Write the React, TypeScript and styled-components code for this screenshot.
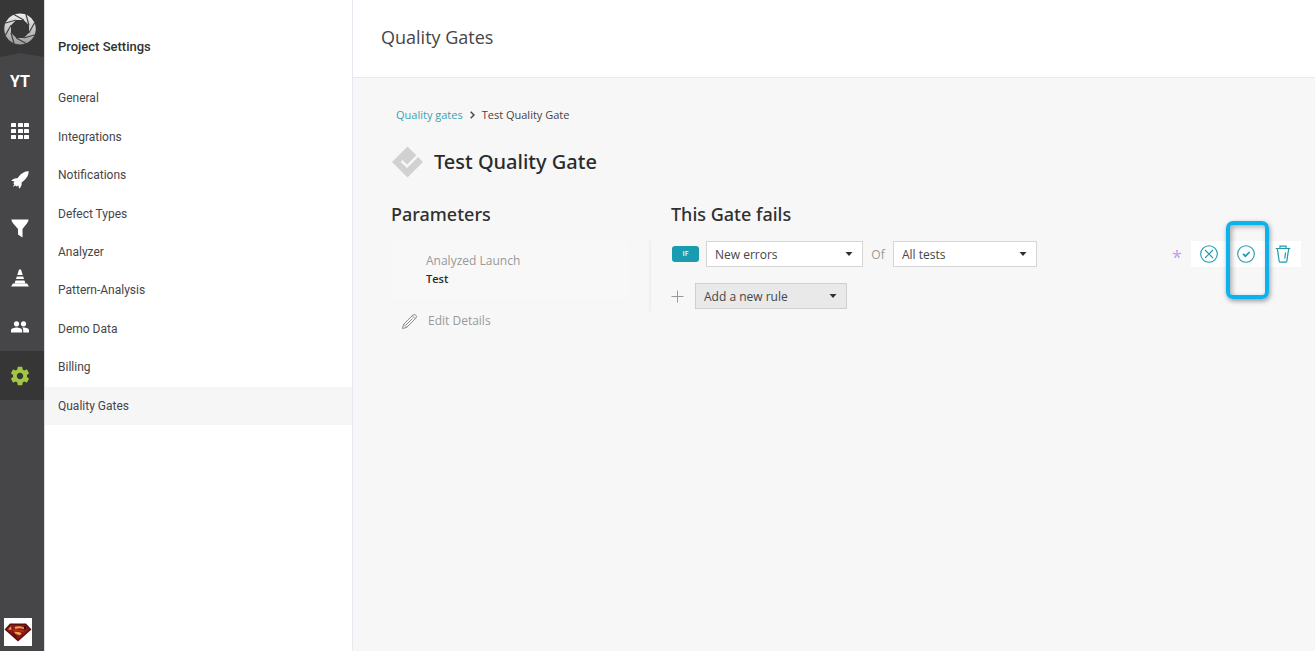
import React from "react";
import styled, { createGlobalStyle, css } from "styled-components";

const GlobalStyle = createGlobalStyle`
  *, *::before, *::after { box-sizing: border-box; }
  body {
    margin: 0;
    background: #f7f7f7;
    color: #464547;
    font-family: "Open Sans", "Noto Sans", sans-serif;
    font-size: 12px;
  }
  button, select { font-family: inherit; }
  h1, h2, h3, p, ul, ol, dl, dd { margin: 0; padding: 0; }
  ul, ol { list-style: none; }
`;

const Page = styled.div`
  display: flex;
  min-height: 100vh;
`;

const Rail = styled.nav`
  flex: 0 0 44px;
  display: flex;
  flex-direction: column;
  background: #464547;
`;

const LogoArea = styled.a`
  display: block;
  height: 57px;
  svg { display: block; }
`;

const RailItem = styled.a<{ $active?: boolean }>`
  height: 49px;
  padding-right: 4px;
  display: flex;
  align-items: center;
  justify-content: center;
  color: ${(p) => (p.$active ? "#a3c644" : "#ffffff")};
  background: ${(p) => (p.$active ? "#363636" : "transparent")};
  font: 700 16px/20px "Roboto", sans-serif;
  text-decoration: none;
`;

const Avatar = styled.button`
  width: 28px;
  height: 28px;
  margin: auto 0 5px 4px;
  padding: 0;
  border: 0;
  background: #ffffff;
  svg { display: block; }
`;

const Settings = styled.aside`
  flex: 0 0 309px;
  padding-top: 36px;
  background: #ffffff;
  border-left: 1px solid #dcdcdc;
  border-right: 1px solid #e6e9f0;
  font-family: "Roboto", sans-serif;
`;

const SettingsTitle = styled.h2`
  padding-left: 13px;
  margin-bottom: 21px;
  font-size: 13px;
  line-height: 22px;
  font-weight: 500;
  color: #303233;
`;

const SettingsList = styled.ul`
  display: grid;
  grid-auto-rows: 1fr;
  height: 346px;
`;

const SettingsLink = styled.a<{ $active?: boolean }>`
  display: flex;
  align-items: center;
  height: 100%;
  padding-left: 13px;
  color: #464547;
  font-size: 12px;
  text-decoration: none;
  background: ${(p) => (p.$active ? "#f6f6f6" : "transparent")};
`;

const Main = styled.main`
  flex: 1;
  min-width: 0;
`;

const Header = styled.header`
  height: 78px;
  padding: 24px 28px;
  background: #ffffff;
  border-bottom: 1px solid #e6e9f0;
`;

const PageTitle = styled.h1`
  font-size: 18px;
  line-height: 26px;
  font-weight: 400;
`;

const Content = styled.div`
  padding: 27px 14px 28px 38px;
`;

const Crumbs = styled.ol`
  display: flex;
  align-items: center;
  gap: 7px;
  padding-left: 5px;
  font-size: 11px;
  line-height: 20px;
  li { display: flex; align-items: center; gap: 7px; }
  a { color: #39a2b1; text-decoration: none; }
`;

const GateHeading = styled.div`
  display: flex;
  align-items: center;
  gap: 11px;
  margin-top: 21px;
  svg { display: block; }
`;

const GateName = styled.h2`
  font-family: "Noto Sans", "Open Sans", sans-serif;
  font-size: 20px;
  line-height: 32px;
  font-weight: 500;
  color: #2b2b2c;
`;

const Columns = styled.div`
  display: flex;
  margin-top: 23px;
`;

const Parameters = styled.section`
  flex: 0 0 280px;
`;

const Gate = styled.section`
  flex: 1;
  min-width: 0;
`;

const SectionTitle = styled.h3`
  font-family: "Noto Sans", "Open Sans", sans-serif;
  font-size: 18px;
  line-height: 26px;
  font-weight: 500;
  color: #303031;
  margin-bottom: 14px;
`;

const ParameterArea = styled.div`
  display: flex;
  justify-content: space-between;
  height: 70px;
  width: 260px;
  border-right: 2px solid #efefef;
`;

const ParameterCard = styled.dl`
  width: 237px;
  height: 58px;
  padding: 11px 0 0 35px;
  background: #f8f8f8;
  border-radius: 3px;
  line-height: 18px;
  dt { color: #999999; }
  dd { color: #2b2b2c; font-size: 11px; font-weight: 600; }
`;

const EditButton = styled.button`
  display: flex;
  align-items: center;
  gap: 10px;
  margin-left: 10px;
  padding: 0;
  border: 0;
  background: none;
  color: #999999;
  font-size: 12px;
  line-height: 20px;
`;

const RuleRow = styled.div`
  display: flex;
  align-items: center;
  height: 26px;
  margin-bottom: 16px;
`;

const IfBadge = styled.span`
  width: 27px;
  height: 16px;
  margin: 0 7px 0 1px;
  border-radius: 3px;
  background: #1a9cb0;
  color: #ffffff;
  font-size: 7px;
  font-weight: 600;
  line-height: 16px;
  text-align: center;
`;

const OfText = styled.span`
  width: 30px;
  text-align: center;
  color: #999999;
`;

const PlusSlot = styled.span`
  width: 24px;
  svg { display: block; }
`;

const SelectBox = styled.div<{ $width: number; $muted?: boolean }>`
  display: grid;
  align-items: center;
  width: ${(p) => p.$width}px;
  height: 26px;
  > * { grid-area: 1 / 1; }
  svg { justify-self: end; margin-right: 10px; pointer-events: none; }
  select {
    appearance: none;
    width: 100%;
    height: 26px;
    padding: 0 24px 0 8px;
    border: 1px solid #d5d5d5;
    border-radius: 0;
    background: #ffffff;
    color: #464547;
    font-size: 12px;
    ${(p) => p.$muted && css`background: #e9e9e9; border-color: #cfcfcf;`}
  }
`;

const Required = styled.span`
  margin: 0 9px 0 auto;
  color: #c69bf5;
  font-size: 18px;
  line-height: 26px;
  height: 20px;
`;

const Actions = styled.div`
  display: flex;
  width: 110px;
  height: 26px;
  background: #ffffff;
`;

const ActionButton = styled.button`
  position: relative;
  flex: 1;
  display: flex;
  align-items: center;
  justify-content: center;
  padding: 0;
  border: 0;
  background: none;
  color: #1f9bae;
`;

const Highlight = styled.span`
  position: absolute;
  top: -20px;
  left: -2px;
  width: 43px;
  height: 78px;
  border: 4px solid #0cb2ee;
  border-radius: 7px;
  box-shadow: 1px 2px 5px rgba(0, 0, 0, 0.4), inset 2px 2px 5px rgba(0, 0, 0, 0.3);
`;

const BLADES = [0, 1, 2, 3, 4, 5, 6, 7];

const Logo = () => (
  <svg width="44" height="57" viewBox="0 0 44 57" aria-hidden="true">
    <defs>
      <linearGradient id="metal" x1="0" y1="0" x2="0" y2="1">
        <stop offset="0" stopColor="#f1f1f1" />
        <stop offset="1" stopColor="#9c9c9c" />
      </linearGradient>
    </defs>
    <path d="M0 0H44V57L20 53L0 57Z" fill="#373737" />
    <path
      fillRule="evenodd"
      fill="url(#metal)"
      d="M20 13.5a15.8 15.5 0 1 0 .01 0ZM16.300 20L23.700 20L29 25.300L29 32.700L23.700 38L16.300 38L11 32.700L11 25.300Z"
    />
    {BLADES.map((i) => (
      <path
        key={i}
        d="M23.700 20L14 14.500"
        transform={`rotate(${i * 45} 20 29)`}
        fill="none"
        stroke="#404040"
        strokeWidth="1.200"
      />
    ))}
  </svg>
);

const GridIcon = () => (
  <svg width="18" height="16" viewBox="0 0 18 16" fill="currentColor" aria-hidden="true">
    {[0, 6, 12].map((y) =>
      [0, 7, 13].map((x) => <rect key={`${x}-${y}`} x={x} y={y} width="5" height="4" rx="0.6" />)
    )}
  </svg>
);

const RocketIcon = () => (
  <svg width="18" height="18" viewBox="0 0 18 18" fill="currentColor" aria-hidden="true">
    <path d="M17.700.300C13.800.200 10.400 2.200 7.800 5.600L6.500 7.300C4.200 6.800 1.800 7.700.300 9.800L3.500 10.400 2.300 12.300 3.400 13.300 1.800 15.700 4.500 14.500 5.500 15.600 7.500 14.400 8 17.700C10.100 16.200 11 14 10.600 11.500L12.500 10C15.900 7.300 17.700 4.200 17.700.300Z" />
  </svg>
);

const FilterIcon = () => (
  <svg width="18" height="19" viewBox="0 0 18 19" fill="currentColor" aria-hidden="true">
    <path d="M.4.500H17.600Q17.400 2.500 16.200 3.900L11.500 10V18.600L7 15.600V10L1.800 3.900Q.6 2.500.4.500Z" />
  </svg>
);

const ConeIcon = () => (
  <svg width="18" height="18" viewBox="0 0 18 18" fill="currentColor" aria-hidden="true">
    <path d="M8 .5H10L11.700 6H6.300ZM5.800 7.400H12.200L13 10H5ZM4.500 11.400H13.500L14.300 14.200H3.700ZM2 14.500H16L18 17.500H0Z" />
  </svg>
);

const MembersIcon = () => (
  <svg width="18" height="12" viewBox="0 0 18 12" fill="currentColor" aria-hidden="true">
    <circle cx="5.500" cy="2.800" r="2.600" />
    <circle cx="12.500" cy="2.800" r="2.600" />
    <path d="M0 11.500V9.300C0 7.300 3.500 6.400 5.600 6.400S11.100 7.300 11.100 9.300V11.500ZM12.200 11.500V9.200C12.200 8 11.700 7.200 10.800 6.600 13.500 6.100 18 7 18 9.300V11.500Z" />
  </svg>
);

const GearIcon = () => (
  <svg width="24" height="24" viewBox="1 1 22 22" fill="currentColor" aria-hidden="true">
    <path d="M19.430 12.980c.04-.32.070-.64.070-.98s-.03-.66-.07-.98l2.110-1.650c.19-.15.240-.42.120-.64l-2-3.460c-.12-.22-.39-.3-.61-.22l-2.490 1c-.52-.4-1.080-.73-1.690-.98l-.38-2.650C14.460 2.180 14.250 2 14 2h-4c-.25 0-.46.180-.49.420l-.38 2.650c-.61.250-1.170.590-1.690.98l-2.490-1c-.23-.09-.49 0-.61.220l-2 3.460c-.13.220-.07.490.12.640l2.110 1.650c-.04.320-.07.650-.07.980s.03.660.07.980l-2.110 1.650c-.19.150-.24.420-.12.640l2 3.460c.12.220.39.300.61.220l2.490-1c.52.400 1.080.730 1.690.98l.38 2.650c.03.240.24.420.49.420h4c.25 0 .46-.18.490-.42l.38-2.650c.61-.25 1.170-.59 1.690-.98l2.490 1c.23.090.49 0 .61-.22l2-3.460c.12-.22.070-.49-.12-.64l-2.110-1.650zM12 15.500c-1.930 0-3.500-1.570-3.500-3.500s1.570-3.500 3.500-3.500 3.500 1.570 3.500 3.500-1.570 3.500-3.500 3.500z" transform="translate(1.800 1.800) scale(0.850)" />
  </svg>
);

const AvatarPicture = () => (
  <svg width="28" height="28" viewBox="0 0 28 28" aria-hidden="true">
    <path d="M6 5.500H22L27.500 11.500L14 23.500L.5 11.500Z" fill="#57100e" />
    <path d="M6.700 7H21.300L25.500 11.500L14 21.700L2.500 11.500Z" fill="#8c1915" />
    <path d="M4 11.500L7 8.200 7.500 11.800ZM10.500 9Q15 7.500 20 9.500L20.500 11Q15 9.400 11.500 11ZM10 13.800Q15 13.500 17.500 15Q17.500 16.500 15.500 17.200L11.500 15.800Z" fill="#eda24a" />
    <path d="M20 8.500L22 8 22 11.500 20 11ZM8 14L12 18L14 20.500L10 17.500Z" fill="#2f0b0b" />
    <path d="M9 11.800Q14 12 20 13.300" stroke="#b52a22" strokeWidth="1.800" fill="none" />
  </svg>
);

const GateIcon = () => (
  <svg width="32" height="32" viewBox="0 0 32 32" aria-hidden="true">
    <path d="M16.500 .5L32 16L16.500 31.500L1 16Z" fill="#d1d1d1" />
    <path d="M10.500 15L16 20.300L27 9.300" fill="none" stroke="#f7f7f7" strokeWidth="2.600" />
  </svg>
);

const ChevronIcon = () => (
  <svg width="5" height="8" viewBox="0 0 5 8" fill="none" stroke="#464547" strokeWidth="1.500" aria-hidden="true">
    <path d="M.7.7L4 4L.7 7.300" />
  </svg>
);

const PencilIcon = () => (
  <svg width="17" height="17" viewBox="0 0 17 17" fill="none" stroke="#8c8c8c" strokeWidth="1" strokeLinejoin="round" aria-hidden="true">
    <path d="M1.500 15.500L2.600 11.300L11.800 2.100Q13.300.8 14.800 2.200Q16.200 3.700 14.900 5.200L5.700 14.400ZM2.800 11.300L5.700 14.200M11.200 2.700L14.300 5.800M5 12L11.500 5.500" />
  </svg>
);

const PlusIcon = () => (
  <svg width="13" height="13" viewBox="0 0 13 13" stroke="#999999" aria-hidden="true">
    <path d="M6.500 .5V12.500M.5 6.500H12.500" />
  </svg>
);

const Caret = () => (
  <svg width="8" height="4" viewBox="0 0 8 4" fill="#2f2f30" aria-hidden="true">
    <path d="M.5 0H7.500L4 4Z" />
  </svg>
);

const CancelIcon = () => (
  <svg width="18" height="18" viewBox="0 0 18 18" fill="none" stroke="currentColor" strokeWidth="1.100" aria-hidden="true">
    <circle cx="9" cy="9" r="8.300" />
    <path d="M5 5L13 13M13 5L5 13" />
  </svg>
);

const ApplyIcon = () => (
  <svg width="18" height="18" viewBox="0 0 18 18" fill="none" stroke="currentColor" strokeWidth="1.100" aria-hidden="true">
    <circle cx="9" cy="9" r="8.300" />
    <path d="M6 8.800L8.400 11.200L12.600 7" strokeWidth="1.700" />
  </svg>
);

const TrashIcon = () => (
  <svg width="16" height="18" viewBox="0 0 16 18" fill="none" stroke="currentColor" strokeWidth="1.200" aria-hidden="true">
    <path d="M.7 3.500H15.300M5 3.300V1.200H11V3.300M2.300 3.700L4.200 16.200Q4.300 17.200 5.300 17.200H10.700Q11.700 17.200 11.800 16.200L13.700 3.700M10.600 7.500L9.700 13.500" />
  </svg>
);

const RAIL = [
  { label: "Dashboards", icon: <GridIcon /> },
  { label: "Launches", icon: <RocketIcon /> },
  { label: "Filters", icon: <FilterIcon /> },
  { label: "Debug", icon: <ConeIcon /> },
  { label: "Members", icon: <MembersIcon /> },
  { label: "Settings", icon: <GearIcon />, active: true },
];

const SETTINGS = [
  "General",
  "Integrations",
  "Notifications",
  "Defect Types",
  "Analyzer",
  "Pattern-Analysis",
  "Demo Data",
  "Billing",
  "Quality Gates",
];

interface DropdownProps {
  label: string;
  value: string;
  width: number;
  muted?: boolean;
}

const Dropdown = ({ label, value, width, muted }: DropdownProps) => (
  <SelectBox $width={width} $muted={muted}>
    <select aria-label={label}>
      <option>{value}</option>
    </select>
    <Caret />
  </SelectBox>
);

export default function App() {
  return (
    <Page>
      <GlobalStyle />
      <Rail>
        <LogoArea href="#home" aria-label="Home">
          <Logo />
        </LogoArea>
        <RailItem href="#project">YT</RailItem>
        {RAIL.map((item) => (
          <RailItem key={item.label} href={`#${item.label}`} aria-label={item.label} $active={item.active}>
            {item.icon}
          </RailItem>
        ))}
        <Avatar aria-label="Profile">
          <AvatarPicture />
        </Avatar>
      </Rail>
      <Settings>
        <SettingsTitle>Project Settings</SettingsTitle>
        <SettingsList>
          {SETTINGS.map((name) => (
            <li key={name}>
              <SettingsLink href={`#${name}`} $active={name === "Quality Gates"}>
                {name}
              </SettingsLink>
            </li>
          ))}
        </SettingsList>
      </Settings>
      <Main>
        <Header>
          <PageTitle>Quality Gates</PageTitle>
        </Header>
        <Content>
          <Crumbs>
            <li>
              <a href="#gates">Quality gates</a>
              <ChevronIcon />
            </li>
            <li>Test Quality Gate</li>
          </Crumbs>
          <GateHeading>
            <GateIcon />
            <GateName>Test Quality Gate</GateName>
          </GateHeading>
          <Columns>
            <Parameters>
              <SectionTitle>Parameters</SectionTitle>
              <ParameterArea>
                <ParameterCard>
                  <dt>Analyzed Launch</dt>
                  <dd>Test</dd>
                </ParameterCard>
              </ParameterArea>
              <EditButton>
                <PencilIcon />
                Edit Details
              </EditButton>
            </Parameters>
            <Gate>
              <SectionTitle>This Gate fails</SectionTitle>
              <RuleRow>
                <IfBadge>IF</IfBadge>
                <Dropdown label="Rule" value="New errors" width={157} />
                <OfText>Of</OfText>
                <Dropdown label="Tests" value="All tests" width={144} />
                <Required>*</Required>
                <Actions>
                  <ActionButton aria-label="Cancel">
                    <CancelIcon />
                  </ActionButton>
                  <ActionButton aria-label="Apply">
                    <ApplyIcon />
                    <Highlight />
                  </ActionButton>
                  <ActionButton aria-label="Delete">
                    <TrashIcon />
                  </ActionButton>
                </Actions>
              </RuleRow>
              <RuleRow>
                <PlusSlot>
                  <PlusIcon />
                </PlusSlot>
                <Dropdown label="New rule" value="Add a new rule" width={152} muted />
              </RuleRow>
            </Gate>
          </Columns>
        </Content>
      </Main>
    </Page>
  );
}
